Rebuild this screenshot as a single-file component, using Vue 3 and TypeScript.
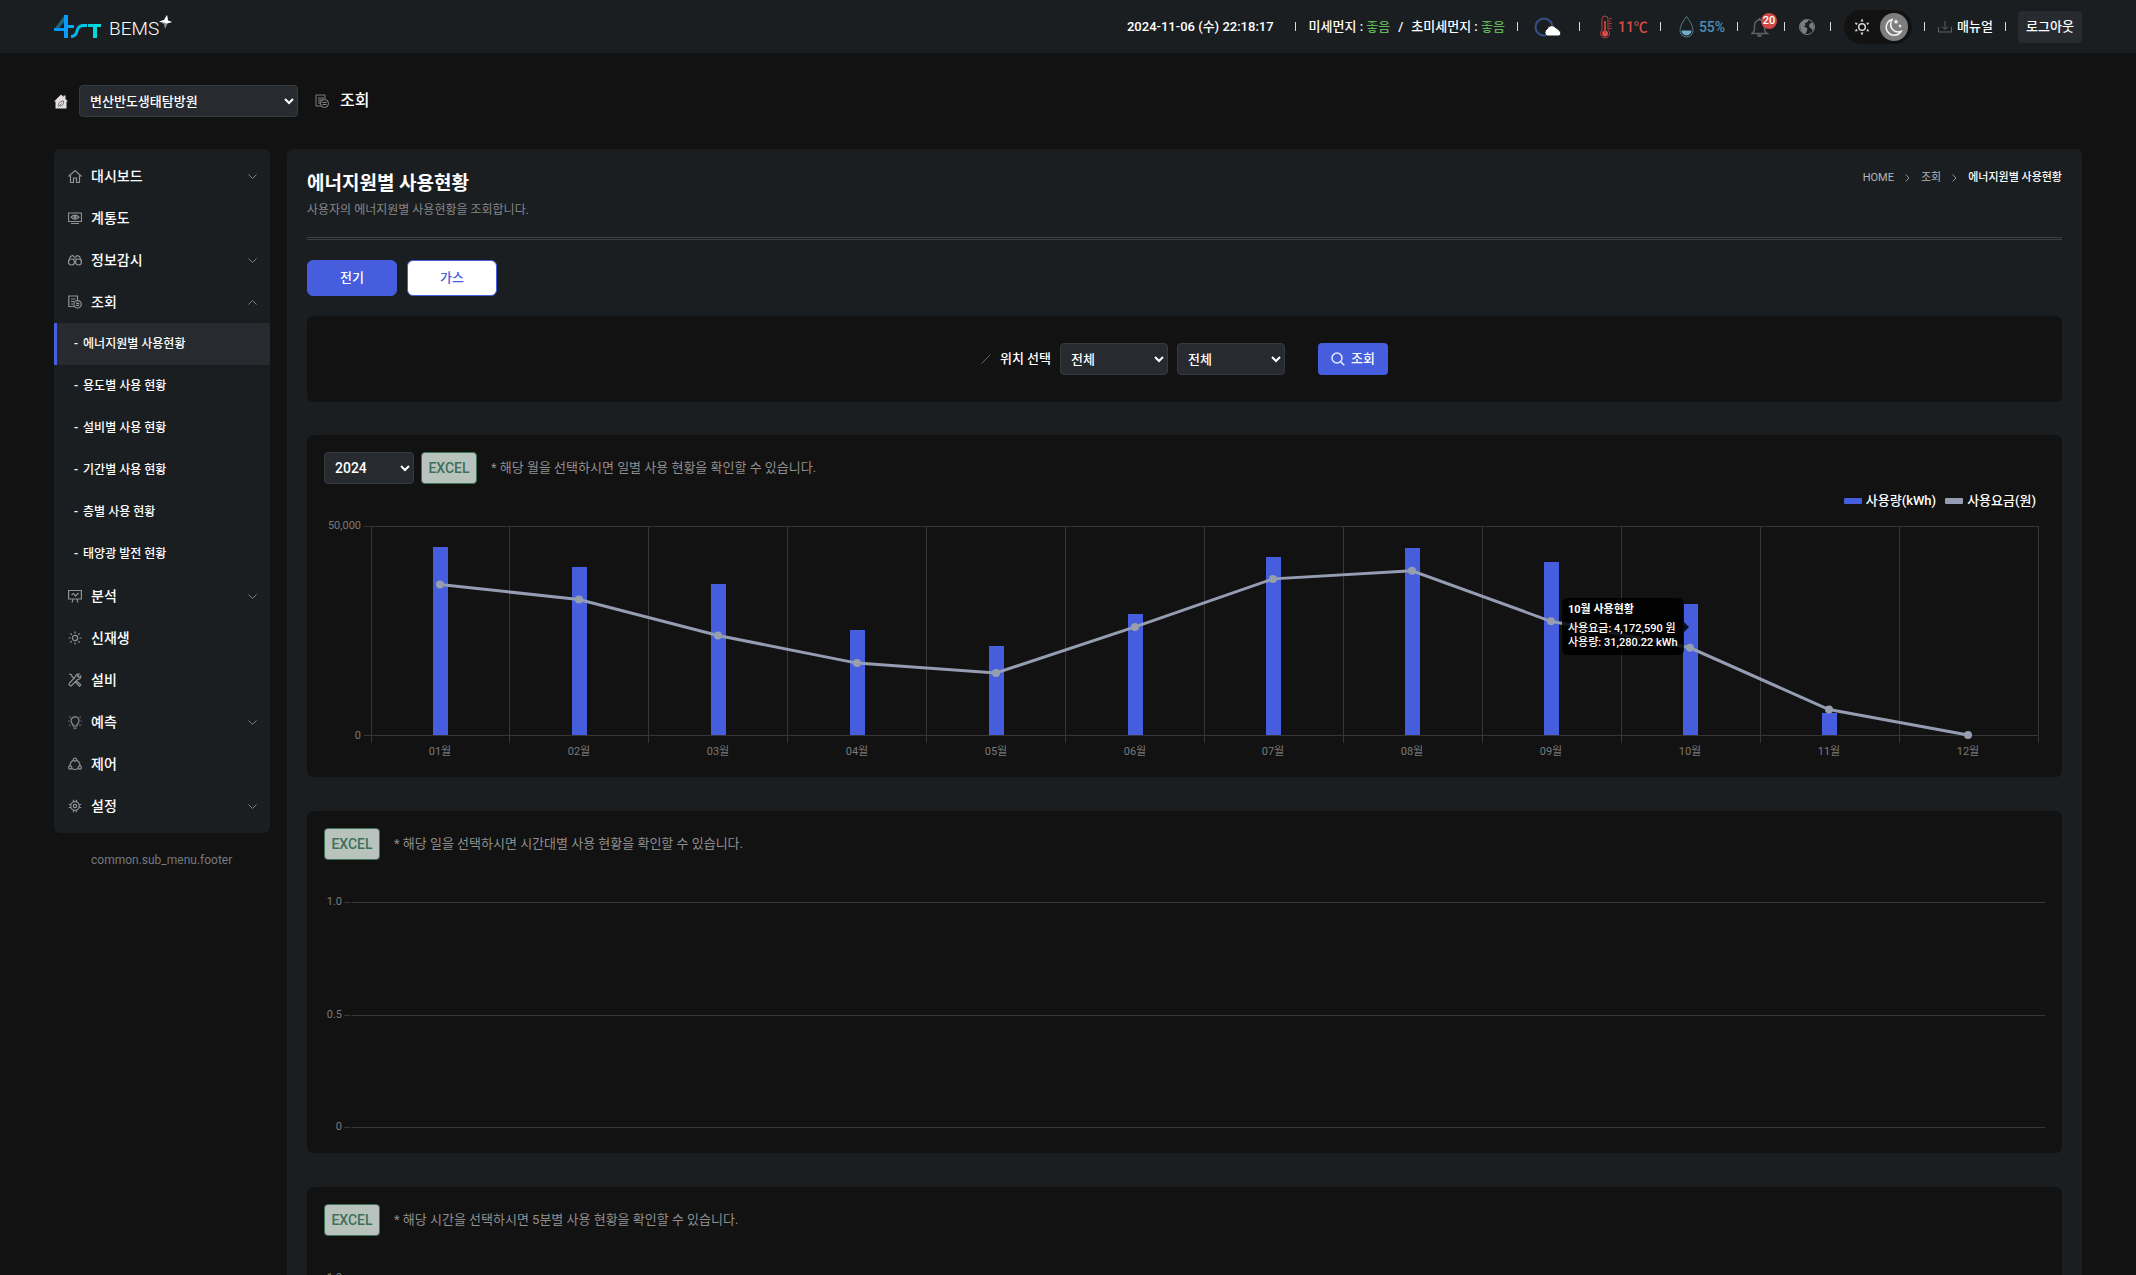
<script setup lang="ts">
import { computed, onBeforeUnmount, onMounted, ref } from 'vue'

interface MenuItem {
  label: string
  icon: string
  expandable: boolean
  children?: string[]
}

interface Month {
  label: string
  usage: number
  fee: number
}

const icons: Record<string, string> = {
  home: '<path d="M.5 7.500 7 1.500l6.500 6M2.500 6.500V13.500h3V9h3v4.500h3V6.500"/>',
  diagram: '<path d="M.5 2h13v8.500H.5zM3 12.500h8"/><path d="M3 6.200q4-4 8 0q-4 4-8 0z"/><circle cx="7" cy="6.200" r="1"/>',
  monitor: '<circle cx="3.500" cy="9" r="3"/><circle cx="10.500" cy="9" r="3"/><path d="M.7 8 2.500 3.500 5 2.500 6 4h2l1-1.500 2.500 1L13.300 8M6 9h2M5 6.500q2-1.500 4 0"/>',
  lookup: '<path d="M9.500 5V1H.8v10.500H6M3 4h4.500M3 6.500h3M3 9h2"/><circle cx="9.600" cy="9.300" r="3.700"/><path d="M8 8.300h3.300M8 10.300h3.300"/>',
  analysis: '<path d="M.6 1.500h12.800v8.500H.6zM5 10.500 4 13.500M9 10.500l1 3M3.500 6 5.500 4.500 7.500 7 10.500 4"/>',
  renewable: '<circle cx="7" cy="7" r="2.600"/><path d="M7 .5v2M7 11.500v2M.5 7h2M11.500 7h2M2.400 2.400l1.400 1.400M10.200 10.200l1.400 1.400M11.600 2.400l-1.400 1.400M3.800 10.200l-1.400 1.400"/>',
  facility: '<path d="M1 1l2.500.8L4 3.500l2.500 2.500M8.500 8l4.300 3.800-1.300 1.500-4-4.300M12.800 3 11 4.500 9.500 3.200 11 1.200Q8 .6 7.500 3.500L1.200 10.500q-.6 2 1.800 2.500L9.500 6.500Q13 6.500 12.800 3z"/>',
  forecast: '<path d="M5 11V9.500Q3 8 3 5.800A4 4 0 0 1 11 5.800Q11 8 9 9.500V11zM5.500 13.200h3M.3 6h1M12.700 6h1M1.500 1.800l.9.700M12.500 1.800l-.9.700M1.500 10.500l.9-.7M12.500 10.500l-.9-.7"/>',
  control: '<circle cx="7" cy="2.600" r="1.600"/><circle cx="2.200" cy="10.500" r="1.600"/><circle cx="11.800" cy="10.500" r="1.600"/><path d="M5.200 3.200Q2 5 2 8.700M8.800 3.200Q12 5 12 8.700M3.800 11.500Q7 13.500 10.200 11.500"/>',
  settings: '<circle cx="7" cy="7" r="4.300"/><circle cx="7" cy="7" r="1.700"/><path d="M5.500.8v2M8.500.8v2M5.500 11.200v2M8.500 11.200v2M.8 5.500h2M.8 8.500h2M11.200 5.500h2M11.200 8.500h2"/>',
}

const menu: MenuItem[] = [
  { label: '대시보드', icon: 'home', expandable: true },
  { label: '계통도', icon: 'diagram', expandable: false },
  { label: '정보감시', icon: 'monitor', expandable: true },
  {
    label: '조회',
    icon: 'lookup',
    expandable: true,
    children: ['에너지원별 사용현황', '용도별 사용 현황', '설비별 사용 현황', '기간별 사용 현황', '층별 사용 현황', '태양광 발전 현황'],
  },
  { label: '분석', icon: 'analysis', expandable: true },
  { label: '신재생', icon: 'renewable', expandable: false },
  { label: '설비', icon: 'facility', expandable: false },
  { label: '예측', icon: 'forecast', expandable: true },
  { label: '제어', icon: 'control', expandable: false },
  { label: '설정', icon: 'settings', expandable: true },
]

const activeSub = ref('에너지원별 사용현황')
const energy = ref('전기')

const months: Month[] = [
  { label: '01월', usage: 44900, fee: 7200000 },
  { label: '02월', usage: 40310, fee: 6480000 },
  { label: '03월', usage: 36100, fee: 4760000 },
  { label: '04월', usage: 25100, fee: 3440000 },
  { label: '05월', usage: 21410, fee: 2970000 },
  { label: '06월', usage: 28900, fee: 5170000 },
  { label: '07월', usage: 42580, fee: 7470000 },
  { label: '08월', usage: 44800, fee: 7860000 },
  { label: '09월', usage: 41400, fee: 5440000 },
  { label: '10월', usage: 31280.22, fee: 4172590 },
  { label: '11월', usage: 5380, fee: 1220000 },
  { label: '12월', usage: 0, fee: 0 },
]
const hovered = ref(9)

// Chart geometry: the width follows the card, the height is fixed.
const chartHost = ref<HTMLElement | null>(null)
const chartWidth = ref(1200)
const plotTop = 42
const plotBottom = 251
const plotLeft = 47
const plotHeight = plotBottom - plotTop
const plotRight = computed(() => chartWidth.value - 7)
const step = computed(() => (plotRight.value - plotLeft) / months.length)
const gridX = computed(() => months.map((_, i) => Math.floor(plotLeft + step.value * (i + 1))))

const points = computed(() =>
  months.map((m, i) => ({
    ...m,
    x: Math.floor(plotLeft + step.value * (i + 0.5)),
    barY: plotBottom - Math.round((m.usage / 50000) * plotHeight),
    lineY: plotBottom - (m.fee / 10000000) * plotHeight,
  })),
)
const linePoints = computed(() => points.value.map((p) => `${p.x},${p.lineY}`).join(' '))
const tip = computed(() => {
  const p = points.value[hovered.value]
  return { ...p, left: p.x - 128, top: Math.round((p.barY + p.lineY) / 2) - 28 }
})

let observer: ResizeObserver | null = null
onMounted(() => {
  const el = chartHost.value
  if (!el) return
  chartWidth.value = el.clientWidth
  observer = new ResizeObserver(() => (chartWidth.value = el.clientWidth))
  observer.observe(el)
})
onBeforeUnmount(() => observer?.disconnect())

const emptyCards = [
  '* 해당 일을 선택하시면 시간대별 사용 현황을 확인할 수 있습니다.',
  '* 해당 시간을 선택하시면 5분별 사용 현황을 확인할 수 있습니다.',
]
const emptyTicks = [
  { label: '1.0', y: 42 },
  { label: '0.5', y: 155 },
  { label: '0', y: 267 },
]
</script>

<template>
  <div class="app">
    <header class="topbar">
      <a class="logo" href="#" aria-label="4ST BEMS">
        <svg class="logo-mark" width="48" height="24" viewBox="0 0 48 24">
          <defs>
            <linearGradient id="brand" x1="0" y1="0" x2="48" y2="0" gradientUnits="userSpaceOnUse">
              <stop offset="0" stop-color="#0094ff" />
              <stop offset="1" stop-color="#00e4d4" />
            </linearGradient>
          </defs>
          <path d="M1 13 10 1h1v5L5 13z" fill="#1c6478" />
          <rect x="0" y="13" width="11" height="3" fill="#0096fa" />
          <rect x="10" y="0" width="4" height="23" fill="#0a9df8" />
          <path d="M14 11.500h6" fill="none" stroke="#0aa5f5" stroke-width="3" />
          <path d="M17 21.500q4 0 5.500-4l1-3q1.500-4 6-4H33" fill="none" stroke="url(#brand)" stroke-width="3" />
          <rect x="34" y="9" width="13" height="3" fill="url(#brand)" />
          <rect x="39" y="12" width="4" height="11" fill="url(#brand)" />
        </svg>
        <span class="logo-name">BEMS</span>
        <svg class="logo-star" width="14" height="14" viewBox="0 0 14 14">
          <path d="M8 0 9 5.500 13 7 8.500 8.500 6 14 5 9 0 6.500 5 5z" fill="#8d9193" />
          <path d="M8 0 9 5.500 13 7 7.500 8.500 5 7.500 0 6.500 5 5z" fill="#fff" />
        </svg>
      </a>

      <div class="status">
        <time class="seg">2024-11-06 (수) 22:18:17</time>
        <div class="seg dust">
          <span>미세먼지 : <em>좋음</em></span><span>/</span><span>초미세먼지 : <em>좋음</em></span>
        </div>
        <div class="seg">
          <svg width="36" height="22" viewBox="0 0 36 22">
            <circle cx="13" cy="11" r="8.500" fill="none" stroke="#36508a" stroke-width="2" />
            <path d="M16 20a4 4 0 0 1 0-7 5 5 0 0 1 9-1 4 4 0 0 1 3 2.500 3 3 0 0 1 0 5.500z" fill="#fff" stroke="#1a1e21" stroke-width="1" />
          </svg>
        </div>
        <div class="seg measure hot">
          <svg width="25" height="24" viewBox="0 0 25 24">
            <path d="M9 15V4a3 3 0 0 1 6 0v11a4.500 4.500 0 1 1-6 0z" fill="none" stroke="#b8403f" stroke-width="1" />
            <circle cx="12" cy="18.500" r="3" fill="#d9504e" />
            <path d="M12 18V6" stroke="#b8403f" stroke-width="2" />
            <path d="M16 3.500h3M16 6h2M16 8.500h3M16 11h2M16 13.500h3" stroke="#a03c3c" stroke-width="1" />
          </svg>
          <span>11℃</span>
        </div>
        <div class="seg measure wet">
          <svg width="25" height="24" viewBox="0 0 25 24">
            <path d="M12.500 1.500Q6 10 6 15.500a6.500 6.500 0 0 0 13 0Q19 10 12.500 1.500z" fill="none" stroke="#53798c" stroke-width="1" />
            <path d="M7.500 15.500h10a5 5 0 0 1-10 0z" fill="#77aac4" />
          </svg>
          <span>55%</span>
        </div>
        <div class="seg">
          <button class="icon-btn bell" type="button" aria-label="알림">
            <svg width="21" height="22" viewBox="0 0 21 22">
              <path d="M1 17.500q2.500-1.500 2.500-4.500V9a5 5 0 0 1 10 0v4q0 3 2.500 4.500z" fill="none" stroke="#5e6163" stroke-width="1.500" />
              <path d="M6 18.500a2.500 2.500 0 0 0 5 0z" fill="#5e6163" />
              <path d="M8.500 2v2" stroke="#5e6163" stroke-width="2" />
            </svg>
            <span class="badge">20</span>
          </button>
        </div>
        <div class="seg">
          <button class="icon-btn" type="button" aria-label="언어">
            <svg width="20" height="18" viewBox="0 0 20 18">
              <circle cx="9" cy="9" r="7.500" fill="#1a1e21" stroke="#7b7d7f" stroke-width="1" />
              <path d="M2 6.500Q4 2 9 1.500l1.500 1-1.500 2-2 .5.500 2-2 1.500 2 .500 2 2-1 3-1.500 2Q2 14 2 6.500zM11 7l2-2.500L15.500 6l.500 4-1.500 3-1-2.500-2-1z" fill="#7b7d7f" />
            </svg>
          </button>
        </div>
        <div class="seg">
          <div class="theme">
            <button class="theme-btn" type="button" aria-label="밝은 테마">
              <svg width="18" height="18" viewBox="0 0 18 18">
                <circle cx="9" cy="9" r="3.300" fill="none" stroke="#d8d8d8" stroke-width="1.500" />
                <path d="M9 .5 10.500 3.500h-3zM9 17.500l1.500-3h-3zM1.600 4.700h3.200L3.400 7.300zM16.400 4.700h-3.200l1.400 2.600zM1.600 13.300h3.200L3.400 10.700zM16.400 13.300h-3.200l1.400-2.600z" fill="#d8d8d8" />
              </svg>
            </button>
            <button class="theme-btn on" type="button" aria-label="어두운 테마">
              <svg width="20" height="20" viewBox="0 0 20 20">
                <path d="M8 2.500Q5 9 9 13q3.500 3 8 1.500A8 8 0 1 1 8 2.500z" fill="none" stroke="#f2f2f2" stroke-width="1.500" />
                <path d="M12 2l.7 1.800 1.800.2-1.400 1.200.4 1.800-1.500-1-1.500 1 .4-1.800L9.500 4l1.800-.2zM16 7l.5 1.300 1.300.2-1 .9.300 1.400-1.100-.8-1.100.8.300-1.400-1-.9 1.300-.2z" fill="#f2f2f2" />
              </svg>
            </button>
          </div>
        </div>
        <div class="seg">
          <a class="manual" href="#">
            <svg width="14" height="12" viewBox="0 0 14 12">
              <path d="M.5 6v5h13V6M7 0v8M4 5.500 7 8.500l3-3" fill="none" stroke="#5b6164" stroke-width="1" />
            </svg>
            <span>매뉴얼</span>
          </a>
        </div>
        <button class="logout" type="button">로그아웃</button>
      </div>
    </header>

    <div class="site-row">
      <svg class="site-home" width="14" height="15" viewBox="0 0 14 15">
        <path d="M7 .5 0 7.500h1.500V14.500h11V7.500H14L11.500 5V1.500h-2V3z" fill="#e4dedd" />
        <path d="M4.500 11.500Q4 7.500 9.500 7q.5 5-3.500 5M4 13l3.500-3.500" fill="none" stroke="#777" stroke-width="1" />
      </svg>
      <select class="select site-select" aria-label="사업장">
        <option>변산반도생태탐방원</option>
      </select>
      <svg class="site-icon" width="14" height="14" viewBox="0 0 14 14">
        <path d="M10 5V1H1v11h5" fill="none" stroke="#7c7c7c" stroke-width="1" />
        <rect x="3" y="3" width="6" height="7" fill="#4a4a4a" />
        <circle cx="9.500" cy="9.500" r="4" fill="#121212" stroke="#8a8a8a" stroke-width="1" />
        <path d="M7.500 8.500h4M7.500 10.500h4" stroke="#8a8a8a" stroke-width="1" />
      </svg>
      <strong class="site-title">조회</strong>
    </div>

    <div class="body">
      <aside class="side">
        <nav class="menu">
          <template v-for="item in menu" :key="item.label">
            <a class="menu-item" href="#">
              <svg class="menu-icon" width="14" height="14" viewBox="0 0 14 14" v-html="icons[item.icon]"></svg>
              <span>{{ item.label }}</span>
              <svg v-if="item.expandable" class="caret" width="9" height="5" viewBox="0 0 9 5">
                <path :d="item.children ? 'M.5 4.500l4-4 4 4' : 'M.5.5l4 4 4-4'" />
              </svg>
            </a>
            <a
              v-for="sub in item.children ?? []"
              :key="sub"
              class="sub-item"
              :class="{ active: sub === activeSub }"
              href="#"
              @click.prevent="activeSub = sub"
            ><span>-</span><span>{{ sub }}</span></a>
          </template>
        </nav>
        <p class="side-foot">common.sub_menu.footer</p>
      </aside>

      <main class="main">
        <div class="head">
          <div>
            <h1>에너지원별 사용현황</h1>
            <p class="desc">사용자의 에너지원별 사용현황을 조회합니다.</p>
          </div>
          <nav class="crumbs">
            <a href="#">HOME</a>
            <svg width="5" height="8" viewBox="0 0 5 8"><path d="M.5.5 4 4 .5 7.500" /></svg>
            <a href="#">조회</a>
            <svg width="5" height="8" viewBox="0 0 5 8"><path d="M.5.5 4 4 .5 7.500" /></svg>
            <strong>에너지원별 사용현황</strong>
          </nav>
        </div>

        <div class="tabs">
          <button
            v-for="name in ['전기', '가스']"
            :key="name"
            class="tab"
            :class="{ on: energy === name }"
            type="button"
            @click="energy = name"
          >{{ name }}</button>
        </div>

        <form class="filter" @submit.prevent>
          <svg class="slash" width="10" height="10" viewBox="0 0 10 10"><path d="M.5 9.500l9-9" /></svg>
          <label for="place-main">위치 선택</label>
          <select id="place-main" class="select place"><option>전체</option></select>
          <select class="select place" aria-label="세부 위치"><option>전체</option></select>
          <button class="search" type="submit">
            <svg width="14" height="14" viewBox="0 0 14 14"><circle cx="6" cy="6" r="5" /><path d="M9.700 9.700l3.600 3.600" /></svg>
            <span>조회</span>
          </button>
        </form>

        <section class="card">
          <div class="tools">
            <select class="select year" aria-label="연도"><option>2024</option></select>
            <button class="excel" type="button">EXCEL</button>
            <p class="note">* 해당 월을 선택하시면 일별 사용 현황을 확인할 수 있습니다.</p>
          </div>
          <div ref="chartHost" class="chart">
            <div class="legend">
              <span class="key"><i class="swatch usage"></i>사용량(kWh)</span>
              <span class="key"><i class="swatch fee"></i>사용요금(원)</span>
            </div>
            <svg :width="chartWidth" height="276" role="img" aria-label="월별 사용량과 사용요금">
              <g class="grid">
                <rect :x="plotLeft - 7" :y="plotTop" :width="plotRight - plotLeft + 8" height="1" />
                <rect :x="plotLeft - 7" :y="plotBottom" :width="plotRight - plotLeft + 8" height="1" />
                <rect :x="plotLeft" :y="plotTop" width="1" :height="plotHeight + 8" />
                <rect v-for="x in gridX" :key="x" :x="x" :y="plotTop" width="1" :height="plotHeight + 8" />
              </g>
              <text class="tick end" :x="plotLeft - 10" :y="plotTop + 3">50,000</text>
              <text class="tick end" :x="plotLeft - 10" :y="plotBottom + 4">0</text>
              <g v-for="(p, i) in points" :key="p.label" @mouseenter="hovered = i">
                <rect class="bar" :x="p.x - 7" :y="p.barY" width="15" :height="plotBottom - p.barY" />
                <text class="tick mid" :x="p.x" :y="plotBottom + 20">{{ p.label }}</text>
              </g>
              <polyline class="line" :points="linePoints" />
              <circle v-for="p in points" :key="p.label" class="dot" :cx="p.x" :cy="p.lineY" r="4" />
              <g class="tip" :transform="`translate(${tip.left} ${tip.top})`">
                <path d="M6 0h110q6 0 6 6v18l5 5-5 5v17q0 6-6 6H6q-6 0-6-6V6q0-6 6-6z" />
                <text class="tip-title" x="6" y="15">{{ tip.label }} 사용현황</text>
                <text x="6" y="34">사용요금: {{ tip.fee.toLocaleString('en-US') }} 원</text>
                <text x="6" y="48">사용량: {{ tip.usage.toLocaleString('en-US') }} kWh</text>
              </g>
            </svg>
          </div>
        </section>

        <section v-for="text in emptyCards" :key="text" class="card">
          <div class="tools">
            <button class="excel" type="button">EXCEL</button>
            <p class="note">{{ text }}</p>
          </div>
          <div class="chart">
            <svg :width="chartWidth" height="276" role="img" aria-label="데이터 없음">
              <g v-for="t in emptyTicks" :key="t.label" class="grid">
                <rect x="20" :y="t.y" width="7" height="1" />
                <rect x="28" :y="t.y" :width="chartWidth - 28" height="1" />
                <text class="tick end" x="18" :y="t.y + 3">{{ t.label }}</text>
              </g>
            </svg>
          </div>
        </section>
      </main>
    </div>
  </div>
</template>

<style>
html,
body {
  background: #121212;
}
html::-webkit-scrollbar {
  display: none;
}
</style>

<style scoped>
.app {
  min-height: 100vh;
  background: #121212;
  color: #fff;
  font: 500 13px/20px Roboto, 'Noto Sans CJK KR', sans-serif;
}
.app *,
.app *::before {
  box-sizing: border-box;
}
a {
  color: inherit;
  text-decoration: none;
}
button,
select {
  font: inherit;
  color: inherit;
  cursor: pointer;
}
svg {
  display: block;
  flex: none;
}
p,
h1 {
  margin: 0;
}
em {
  font-style: normal;
  color: #62b35c;
}

/* top bar */
.topbar {
  display: flex;
  align-items: center;
  justify-content: space-between;
  height: 53px;
  padding: 0 54px;
  background: #1a1e21;
}
.logo {
  display: flex;
  align-items: center;
}
.logo-name {
  margin: 4px 0 0 7px;
  font-size: 19px;
  font-weight: 300;
}
.logo-star {
  margin-bottom: 10px;
}
.status {
  display: flex;
  align-items: center;
}
.seg {
  display: flex;
  align-items: center;
  padding: 0 13px;
  position: relative;
  white-space: nowrap;
}
time.seg {
  padding-right: 22px;
}
.seg::after {
  content: '';
  position: absolute;
  right: 0;
  top: 50%;
  width: 1px;
  height: 9px;
  margin-top: -5px;
  background: #d9d9d9;
}
.dust {
  gap: 8px;
}
.measure {
  font-size: 14px;
}
.hot {
  color: #d84c4a;
}
.wet {
  color: #4c8db3;
}
.icon-btn {
  display: block;
  position: relative;
  padding: 0;
  border: 0;
  background: none;
}
.badge {
  position: absolute;
  left: 10px;
  top: -3px;
  width: 16px;
  height: 16px;
  border-radius: 8px;
  background: #cf4746;
  font-size: 11px;
  line-height: 16px;
  text-align: center;
  color: #fff;
}
.theme {
  display: flex;
  align-items: center;
  gap: 4px;
  width: 68px;
  height: 34px;
  padding: 0 4px;
  border-radius: 17px;
  background: #121212;
}
.theme-btn {
  display: flex;
  align-items: center;
  justify-content: center;
  width: 28px;
  height: 28px;
  padding: 0;
  border: 0;
  border-radius: 14px;
  background: none;
}
.theme-btn.on {
  background: #7d7d7d;
}
.manual {
  display: flex;
  align-items: center;
  gap: 5px;
}
.logout {
  width: 64px;
  height: 32px;
  margin-left: 12px;
  padding: 0;
  border: 0;
  border-radius: 4px;
  background: #272a2f;
}

/* site selector row */
.site-row {
  display: flex;
  align-items: center;
  height: 32px;
  margin: 32px 54px;
}
.select {
  height: 32px;
  padding: 0 4px 0 6px;
  border: 1px solid #343a40;
  border-radius: 4px;
  background: #272a2f;
  color: #fff;
}
.site-select {
  width: 219px;
  margin: 0 17px 0 11px;
}
.site-title {
  margin-left: 11px;
  font-size: 16px;
  line-height: 24px;
  font-weight: 500;
}

/* sidebar */
.body {
  display: flex;
  align-items: flex-start;
  gap: 17px;
  padding: 0 54px;
}
.side {
  flex: none;
  width: 216px;
}
.menu {
  padding: 6px 0;
  border-radius: 6px;
  background: #1a1e21;
}
.menu-item {
  display: flex;
  align-items: center;
  height: 42px;
  padding: 0 13px 0 14px;
  font-size: 14px;
}
.menu-icon {
  margin-right: 9px;
  fill: none;
  stroke: #909293;
  stroke-width: 1.2;
}
.caret {
  margin-left: auto;
  fill: none;
  stroke: #7d8082;
}
.sub-item {
  display: flex;
  align-items: center;
  gap: 5px;
  height: 42px;
  padding-left: 17px;
  border-left: 3px solid transparent;
  font-size: 12px;
}
.sub-item.active {
  border-left-color: #465ddd;
  background: #272a2f;
}
.side-foot {
  padding: 17px 0 0 37px;
  font-size: 12px;
  font-weight: 400;
  color: #747a80;
}

/* main panel */
.main {
  flex: 1;
  min-width: 0;
  padding: 20px 20px 34px;
  border-radius: 6px;
  background: #1a1e21;
}
.head {
  display: flex;
  justify-content: space-between;
  height: 71px;
  border-bottom: 3px double #3c4043;
}
h1 {
  font-size: 19px;
  line-height: 30px;
  font-weight: 700;
}
.desc {
  margin-top: 1px;
  font-size: 12px;
  font-weight: 400;
  color: #858788;
}
.crumbs {
  display: flex;
  align-items: center;
  gap: 11px;
  height: 18px;
  font-size: 11px;
  color: #b4b6b7;
}
.crumbs a {
  font-weight: 400;
}
.crumbs strong {
  font-weight: 500;
  color: #fff;
}
.crumbs svg {
  fill: none;
  stroke: #909293;
}
.tabs {
  display: flex;
  gap: 10px;
  margin: 20px 0;
}
.tab {
  width: 90px;
  height: 36px;
  padding: 0;
  border: 1px solid #465ddd;
  border-radius: 6px;
  background: #fff;
  color: #465ddd;
}
.tab.on {
  background: #465ddd;
  color: #fff;
}
.filter {
  display: flex;
  align-items: center;
  justify-content: center;
  height: 86px;
  margin-bottom: 33px;
  border-radius: 6px;
  background: #121212;
}
.slash {
  margin-right: 9px;
  fill: none;
  stroke: #6f6357;
}
.place {
  width: 108px;
  margin-left: 9px;
}
.search {
  display: flex;
  align-items: center;
  justify-content: center;
  gap: 6px;
  width: 70px;
  height: 32px;
  margin-left: 33px;
  padding: 0;
  border: 0;
  border-radius: 4px;
  background: #465ddd;
}
.search svg {
  fill: none;
  stroke: #e8ebfb;
  stroke-width: 1.5;
}

/* chart cards */
.card {
  padding: 17px;
  border-radius: 6px;
  background: #121212;
}
.card + .card {
  margin-top: 34px;
}
.tools {
  display: flex;
  align-items: center;
}
.year {
  width: 90px;
  margin-right: 7px;
  font-size: 14px;
}
.excel {
  width: 56px;
  height: 32px;
  padding: 0;
  border: 1px solid #3f7257;
  border-radius: 4px;
  background: #b8c3bd;
  font-size: 14px;
  color: #40705a;
}
.note {
  margin-left: 14px;
  font-weight: 400;
  color: #8f8f8f;
}
.chart {
  position: relative;
  height: 276px;
}
.chart svg {
  position: relative;
}
.legend {
  position: absolute;
  top: 7px;
  right: 9px;
  display: flex;
  gap: 9px;
}
.key {
  display: flex;
  align-items: center;
  gap: 4px;
}
.swatch {
  width: 18px;
  height: 6px;
  border-radius: 1px;
}
.swatch.usage {
  background: #465ddd;
}
.swatch.fee {
  background: #959db3;
}
.grid rect {
  fill: #363636;
}
.tick {
  fill: #7a7a7a;
  font-size: 11px;
  font-weight: 400;
}
.end {
  text-anchor: end;
}
.mid {
  text-anchor: middle;
}
.bar {
  fill: #465ddd;
}
.line {
  fill: none;
  stroke: #959db3;
  stroke-width: 3;
}
.dot {
  fill: #969fae;
}
.tip path {
  fill: rgba(0, 0, 0, 0.85);
}
.tip text {
  fill: #fff;
  font-size: 11px;
}
.tip .tip-title {
  font-weight: 700;
}
</style>
